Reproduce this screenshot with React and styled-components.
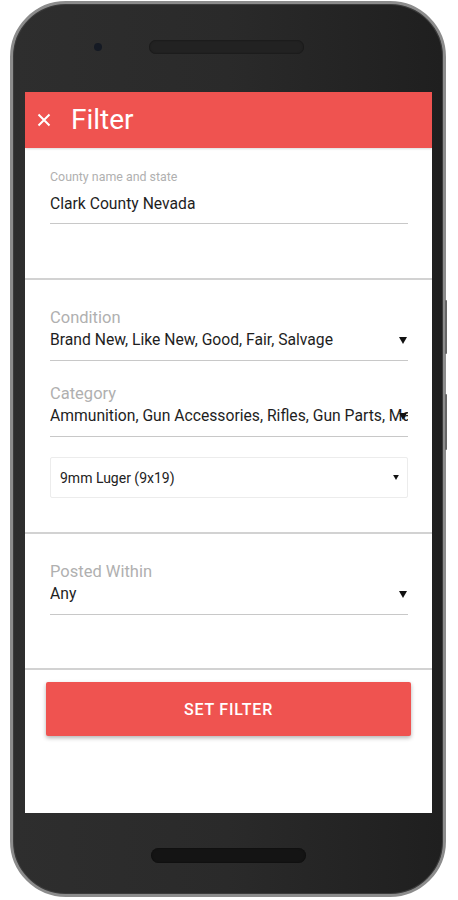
import React from "react";
import styled, { createGlobalStyle } from "styled-components";

const GlobalStyle = createGlobalStyle`
  html, body {
    margin: 0;
    padding: 0;
    background: #ffffff;
    font-family: Roboto, "Liberation Sans", sans-serif;
  }
`;

const RED = "#ef5350";

const Page = styled.div`
  padding: 1px 0 0 10px;
`;

const Phone = styled.div`
  position: relative;
  width: 436px;
  height: 896px;
  box-sizing: border-box;
  border: 3px solid #8c8c8c;
  border-radius: 56px;
  background: linear-gradient(90deg, #2e2e2e 0%, #2a2a2a 50%, #1f1f1f 100%);
  box-shadow: inset 0 0 0 1px #3c3c3c;
  display: flex;
  flex-direction: column;
`;

const SideButton = styled.div`
  position: absolute;
  right: -4px;
  top: ${(p) => p.top}px;
  width: 2px;
  height: ${(p) => p.length}px;
  background: #666;
  border-radius: 1px;
`;

const TopBezel = styled.div`
  height: 88px;
  box-sizing: border-box;
  padding: 0 0 3px 81px;
  display: flex;
  align-items: center;
  gap: 47px;
`;

const Camera = styled.div`
  width: 8px;
  height: 8px;
  border-radius: 50%;
  background: #151a24;
`;

const Speaker = styled.div`
  width: 155px;
  height: ${(p) => p.h || 14}px;
  border-radius: 8px;
  background: ${(p) => (p.dark ? "#141414" : "#222")};
  box-shadow: inset 0 0 2px rgba(0, 0, 0, 0.6);
`;

const Screen = styled.div`
  flex: 1;
  margin: 0 11px 0 12px;
  background: #fff;
  display: flex;
  flex-direction: column;
  overflow: hidden;
`;

const BottomBezel = styled.div`
  height: 81px;
  box-sizing: border-box;
  padding-top: 4px;
  display: flex;
  align-items: center;
  justify-content: center;
`;

const Header = styled.div`
  height: 56px;
  background: ${RED};
  display: flex;
  align-items: center;
  color: #fff;
  padding-left: 12px;
  box-shadow: 0 1px 2px rgba(0, 0, 0, 0.15);
`;

const Title = styled.div`
  font-size: 28px;
  margin-left: 20px;
  line-height: 1;
`;

const Section = styled.div`
  padding: ${(p) => p.pad};
  border-bottom: ${(p) => (p.last ? "none" : "2px solid #d2d2d2")};
`;

const Field = styled.div`
  position: relative;
  border-bottom: 1.5px solid #c8c8c8;
  padding-bottom: ${(p) => p.pb || 11}px;
  margin-bottom: ${(p) => p.mb || 0}px;
`;

const Label = styled.div`
  color: #b0b0b0;
  font-size: ${(p) => (p.small ? 12.4 : 16.5)}px;
  line-height: ${(p) => (p.small ? 14 : 18)}px;
`;

const Value = styled.div`
  color: #1e1e1e;
  font-size: 15.7px;
  line-height: 18px;
  margin-top: ${(p) => p.mt || 4}px;
  white-space: nowrap;
  overflow: hidden;
  padding-right: ${(p) => (p.clip ? 0 : 14)}px;
`;

const Arrow = styled.svg`
  position: absolute;
  right: ${(p) => p.r || 1}px;
  bottom: ${(p) => p.b || 16}px;
`;

const SelectBox = styled.div`
  position: relative;
  height: 41px;
  box-sizing: border-box;
  border: 1px solid #ececec;
  border-radius: 2px;
  display: flex;
  align-items: center;
  padding-left: 9px;
  font-size: 14px;
  color: #222;
`;

const Button = styled.button`
  width: 100%;
  height: 54px;
  border: none;
  border-radius: 2px;
  background: ${RED};
  color: #fff;
  font-family: Roboto, "Liberation Sans", sans-serif;
  font-size: 16px;
  font-weight: 500;
  letter-spacing: 0.8px;
  box-shadow: 0 2px 4px rgba(0, 0, 0, 0.3);
`;

const Caret = ({ size = 8, r, b }) => (
  <Arrow width={size} height={size - 1} viewBox="0 0 8 7" r={r} b={b}>
    <path d="M0 0 H8 L4 7 Z" fill="#111" />
  </Arrow>
);

const CloseIcon = () => (
  <svg width="14" height="14" viewBox="0 0 14 14">
    <path d="M1.5 1.5 L12.5 12.5 M12.5 1.5 L1.5 12.5" stroke="#fff" strokeWidth="2" />
  </svg>
);

export default function App() {
  return (
    <>
      <GlobalStyle />
      <Page>
        <Phone>
          <SideButton top={296} length={54} />
          <SideButton top={390} length={56} />
          <TopBezel>
            <Camera />
            <Speaker />
          </TopBezel>
          <Screen>
            <Header>
              <CloseIcon />
              <Title>Filter</Title>
            </Header>

            <Section pad="22px 24px 54px 25px">
              <Field pb={10}>
                <Label small>County name and state</Label>
                <Value mt={11}>Clark County Nevada</Value>
              </Field>
            </Section>

            <Section pad="29px 24px 34px 25px">
              <Field mb={24}>
                <Label>Condition</Label>
                <Value>Brand New, Like New, Good, Fair, Salvage</Value>
                <Caret />
              </Field>
              <Field mb={20}>
                <Label>Category</Label>
                <Value clip>
                  Ammunition, Gun Accessories, Rifles, Gun Parts, Magazines
                </Value>
                <Caret />
              </Field>
              <SelectBox>
                9mm Luger (9x19)
                <Caret size={6} r={8} b={17} />
              </SelectBox>
            </Section>

            <Section pad="29px 24px 53px 25px">
              <Field>
                <Label>Posted Within</Label>
                <Value>Any</Value>
                <Caret />
              </Field>
            </Section>

            <Section last pad="12px 21px 0 21px">
              <Button>SET FILTER</Button>
            </Section>
          </Screen>
          <BottomBezel>
            <Speaker dark h={15} />
          </BottomBezel>
        </Phone>
      </Page>
    </>
  );
}
